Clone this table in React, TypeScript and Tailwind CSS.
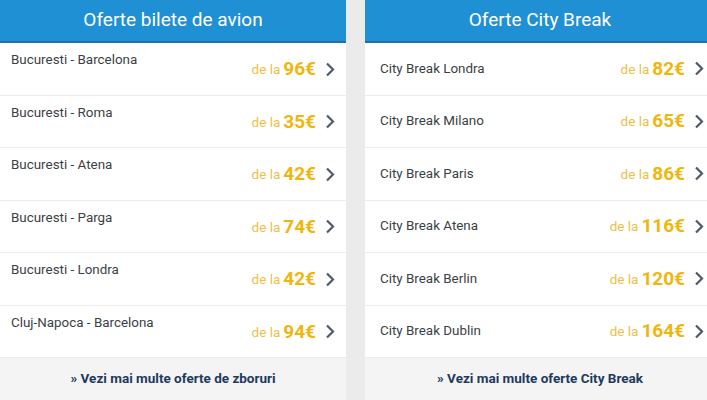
const flights = [
  { name: "Bucuresti - Barcelona", price: "96" },
  { name: "Bucuresti - Roma", price: "35" },
  { name: "Bucuresti - Atena", price: "42" },
  { name: "Bucuresti - Parga", price: "74" },
  { name: "Bucuresti - Londra", price: "42" },
  { name: "Cluj-Napoca - Barcelona", price: "94" },
]

const cityBreaks = [
  { name: "City Break Londra", price: "82" },
  { name: "City Break Milano", price: "65" },
  { name: "City Break Paris", price: "86" },
  { name: "City Break Atena", price: "116" },
  { name: "City Break Berlin", price: "120" },
  { name: "City Break Dublin", price: "164" },
]

function Chevron() {
  return (
    <svg width="10" height="15" viewBox="0 0 10 15" className="ml-[9px] shrink-0">
      <path d="M2 1.5 L8 7.5 L2 13.5" fill="none" stroke="#4f5b6b" strokeWidth="2.2" />
    </svg>
  )
}

function Panel({
  title,
  items,
  footer,
  nameTop,
  width,
}: {
  title: string
  items: { name: string; price: string }[]
  footer: string
  nameTop: boolean
  width: string
}) {
  return (
    <div className={`${width} shrink-0 flex flex-col bg-white`}>
      <div className="h-[43px] bg-[#1f90d3] border-b-2 border-[#1a72b5] flex items-center justify-center text-white text-[19px]">
        {title}
      </div>
      {items.map((it) => (
        <div
          key={it.name}
          className={`h-[52.5px] border-b border-[#ececec] flex justify-between pr-[11px] ${
            nameTop ? "items-start pl-[11px]" : "items-center pl-[15px]"
          }`}
        >
          <span className={`text-[13.4px] text-[#3b3f45] ${nameTop ? "mt-[7px]" : ""}`}>{it.name}</span>
          <div className={`flex items-center ${nameTop ? "self-center mt-[1px]" : ""}`}>
            <span className="text-[13.5px] text-[#ecc04a] mr-[3px]">de la</span>
            <span className="text-[19px] font-bold text-[#f0b60d]">{it.price}€</span>
            <Chevron />
          </div>
        </div>
      ))}
      <div className="flex-1 bg-[#f4f4f5] flex items-center justify-center text-[13.5px] font-bold text-[#1e3a5c] pb-[1px]">
        {footer}
      </div>
    </div>
  )
}

export default function App() {
  return (
    <div
      className="w-[707px] h-[400px] overflow-hidden bg-[#ebebeb] flex gap-[19px]"
      style={{ fontFamily: "Roboto, 'Liberation Sans', sans-serif" }}
    >
      <Panel
        title="Oferte bilete de avion"
        items={flights}
        footer="» Vezi mai multe oferte de zboruri"
        nameTop
        width="w-[346px]"
      />
      <Panel
        title="Oferte City Break"
        items={cityBreaks}
        footer="» Vezi mai multe oferte City Break"
        nameTop={false}
        width="w-[350px]"
      />
    </div>
  )
}
